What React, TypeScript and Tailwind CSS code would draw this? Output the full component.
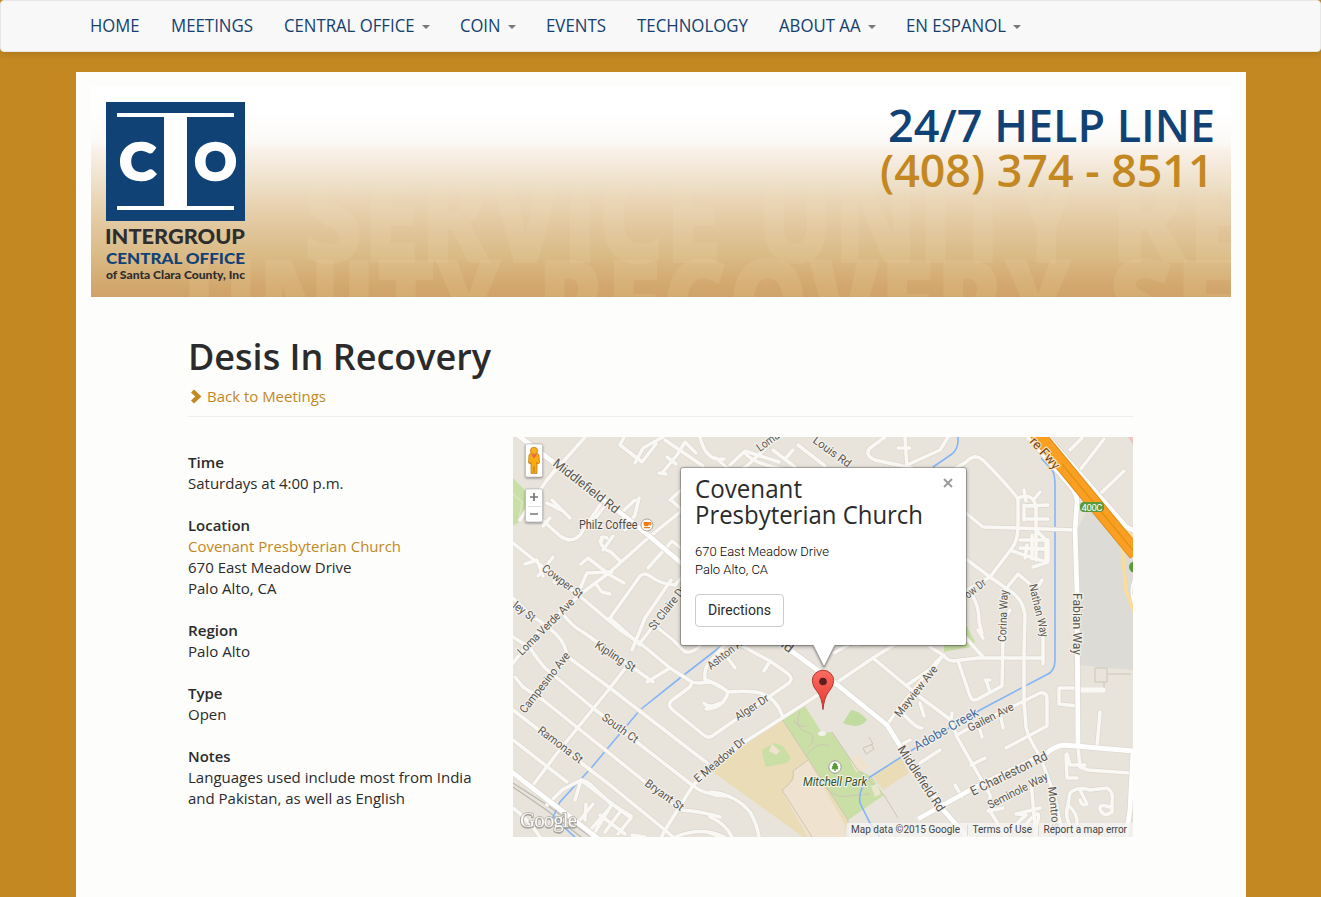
import React from "react";

const NAV = [
  { label: "HOME", left: "w-[81px]", text: 49.5 },
  { label: "MEETINGS", left: "w-[113px]", text: 82 },
  { label: "CENTRAL OFFICE", left: "w-[176px]", text: 130.5, caret: true },
  { label: "COIN", left: "w-[86px]", text: 40.5, caret: true },
  { label: "EVENTS", left: "w-[91px]", text: 60 },
  { label: "TECHNOLOGY", left: "w-[142px]", text: 111 },
  { label: "ABOUT AA", left: "w-[127px]", text: 81.5, caret: true },
  { label: "EN ESPANOL", left: "w-[140px]", text: 100, caret: true },
];

function Fit({ text, width, size, weight = 400 }: { text: string; width: number; size: number; weight?: number }) {
  return (
    <svg width={width} height={size * 1.3} className="overflow-visible">
      <text x={0} y={size} fontSize={size} fontWeight={weight} textLength={width} lengthAdjust="spacingAndGlyphs" fill="currentColor">
        {text}
      </text>
    </svg>
  );
}

function Nav() {
  return (
    <nav className="flex h-[52px] rounded border border-[#e7e7e7] bg-[#f8f8f8] pl-[89px] text-[#13406f] shadow-[0_2px_6px_rgba(90,60,0,0.22)]">
      {NAV.map((n) => (
        <div key={n.label} className={`flex shrink-0 items-start pt-[13px] ${n.left}`}>
          <Fit text={n.label} width={n.text} size={18} />
          {n.caret && <span className="mt-[11px] ml-[7px] border-x-4 border-t-4 border-x-transparent border-t-[#777]" />}
        </div>
      ))}
    </nav>
  );
}

function Logo() {
  return (
    <svg width="140" height="184" viewBox="106 102 140 184" className="shrink-0" fontFamily="Lato, sans-serif">
      <rect x="106" y="102" width="139" height="119" fill="#114275" />
      <path d="M117 113h117v4h-47v89h47v4H117v-4h47v-89h-47z" fill="#fff" />
      <g fill="#fff" stroke="#fff" strokeWidth="2.6" fontWeight="900" fontSize="51">
        <text x="119.500" y="179.500" textLength="36" lengthAdjust="spacingAndGlyphs">C</text>
        <text x="194.500" y="179.500" textLength="42" lengthAdjust="spacingAndGlyphs">O</text>
      </g>
      <g fontWeight="900">
        <text x="105" y="244" fontSize="20" fill="#2e2e2e" textLength="140" lengthAdjust="spacingAndGlyphs">INTERGROUP</text>
        <text x="106" y="264" fontSize="15.5" fill="#114275" textLength="139" lengthAdjust="spacingAndGlyphs">CENTRAL OFFICE</text>
        <text x="106" y="279" fontSize="11" fill="#2e2e2e" textLength="139" lengthAdjust="spacingAndGlyphs">of Santa Clara County, Inc</text>
      </g>
    </svg>
  );
}

function Watermark() {
  return (
    <svg className="absolute inset-0" width="1140" height="211" viewBox="91 86 1140 211" fontFamily="Open Sans, sans-serif" fontWeight="800" fontSize="127">
      <defs>
        <linearGradient id="ink" gradientUnits="userSpaceOnUse" x1="0" y1="165" x2="0" y2="297">
          <stop offset="0" stopColor="#f3e6c6" stopOpacity="0" />
          <stop offset="0.3" stopColor="#f3e6c6" stopOpacity="0.1" />
          <stop offset="0.6" stopColor="#f3e0bc" stopOpacity="0.13" />
          <stop offset="1" stopColor="#ecd094" stopOpacity="0.19" />
        </linearGradient>
      </defs>
      <g fill="url(#ink)">
        <text x="303" y="263" textLength="419" lengthAdjust="spacingAndGlyphs">SERVICE</text>
        <text x="757" y="263" textLength="323" lengthAdjust="spacingAndGlyphs">UNITY</text>
        <text x="1110" y="263" textLength="140" lengthAdjust="spacingAndGlyphs">RE</text>
        <text x="182" y="351" textLength="320" lengthAdjust="spacingAndGlyphs">UNITY</text>
        <text x="537" y="351" textLength="535" lengthAdjust="spacingAndGlyphs">RECOVERY</text>
        <text x="1108" y="351" textLength="130" lengthAdjust="spacingAndGlyphs">SE</text>
      </g>
    </svg>
  );
}

function Banner() {
  return (
    <header className="relative flex h-[211px] justify-between overflow-hidden bg-[linear-gradient(180deg,#fff_0%,#fff_12%,#fbfaf7_26%,#f8efe6_32%,#efe2cd_44%,#e9d4b4_55%,#e1c69c_68%,#dabb86_80%,#d5ad75_90%,#cfa268_100%)] pr-[16px] pl-[15px]">
      <Watermark />
      <div className="relative pt-4">
        <Logo />
      </div>
      <div className="relative flex flex-col items-end pt-[10px]">
        <div className="h-[45px] text-[#114275]">
          <Fit text="24/7 HELP LINE" width={327} size={46} weight={600} />
        </div>
        <div className="h-[45px] pr-px text-[#c38822]">
          <Fit text="(408) 374 - 8511" width={333.500} size={46} weight={600} />
        </div>
      </div>
    </header>
  );
}

const MINOR = [
  "M777 437L748 465L680 512L648 538L610 572L582 593L533 637L510 667",
  "M513 543L543 567L582 598L620 630L640 643L670 668L692 682Q697 684 707 682Q715 682 720 687",
  "M706 680Q720 685 728 692Q750 690 760 693Q776 698 782 715",
  "M728 692Q724 708 706 709", "M692 682L690 687L671 701Q667 706 674 711L705 736Q710 739 715 734L789 683Q794 678 787 673L770 661L753 652Q730 637 722 648L708 664Q704 670 705 680",
  "M770 661L764 671", "M722 650L735 668", "M704 703Q708 709 720 703",
  "M560 610Q572 627 583 632L653 682", "M513 598L533 617Q560 633 565 648L568 657L610 688L707 763",
  "M513 637L530 648Q538 660 545 668L593 708L692 785Q704 795 725 796",
  "M515 677L523 687L543 700L578 728L680 810Q700 811 720 817",
  "M513 710L580 762L610 785L665 830L673 837", "M513 740L567 782",
  "M630 662L610 688L558 752L533 785", "M660 840L665 830L692 787L710 767L743 743L810 700L833 685L873 658L897 643L967 590L990 577L1012 548Q1018 540 1018 525L1018 500Q1018 496 983 460Q975 453 966 462L945 475",
  "M640 643L654 625L673 640L684 651Q690 655 700 646", "M647 682L670 668",
  "M560 463L547 480L531 503L520 520", "M585 437L547 480", "M547 503L563 511M552 500L570 518M543 526L550 518",
  "M541 519L560 536Q571 544 580 535L600 505", "M590 525L604 507", "M600 541Q603 550 611 552L620 561M602 540Q599 535 607 538",
  "M625 530L635 515L639 498M622 512L635 500", "M624 437L620 445L642 462L656 444M635 463L643 448L663 437",
  "M665 440L703 466M663 472L677 455L685 442L696 453M666 474L659 473M667 457L676 464",
  "M581 564L588 558L610 575L624 583M595 583L602 592L610 594M613 536L603 550", "M610 618L640 576Q644 572 650 576Q660 584 675 585L683 576",
  "M610 618L640 645M578 593L587 573L612 572M543 576L537 560L525 564M553 557L538 576M567 585L554 582",
  "M648 568L672 541L683 550", "M670 500L681 490M671 500L681 509", "M671 580L645 618L632 650",
  "M700 437Q706 462 724 459M716 458L735 475M745 453Q753 464 787 470M773 450L795 467M730 465L745 451L779 462M785 459L793 450",
  "M798 445L825 466M870 448Q864 455 875 460L912 468M870 448L885 437M905 437L907 468M898 448L910 448M907 465L940 450L948 437",
  "M575 800L581 780L611 803L631 818L618 834M585 820L586 804M580 820L593 804M592 837L612 804M600 815L625 834M608 810L592 828M620 812L605 832M645 837L632 835",
  "M513 808Q529 820 540 837M547 805L562 790L577 782Q583 778 591 785L610 803L631 816",
  "M675 837Q702 826 724 837M710 792Q735 794 750 812Q757 824 759 837M710 817Q726 824 732 837M710 833L720 837",
  "M887 725L896 712L936 662L944 655M873 658L920 697L951 720L957 737L990 795L990 811L1006 837M900 710Q916 729 922 728",
  "M930 647L943 655Q948 661 953 661L978 658L1015 658L1043 658M943 655L936 665M958 661L970 696Q972 702 978 699L1002 686L1003 635Q1003 620 1010 610M990 680L985 680M986 680L990 692",
  "M983 638L978 630M952 713L951 720M920 703L924 716M957 735L980 722L1024 701L1040 693Q1047 691 1047 700L1047 726L1006 748M1024 705L1024 651L1025 615Q1023 601 1013 593L990 577L966 559",
  "M1000 713L1003 728M980 730L982 737M971 765L985 758M955 785L962 797M1008 832L1026 815L1016 814L1040 808M1024 700L1026 727Q1028 738 1040 756L1055 797L1063 837M1031 782L1036 837",
  "M1043 664L1043 635M966 513L983 527L1017 528L1075 530M1005 590L1018 574L1030 584M1039 585L1042 580M967 590Q979 600 979 622L982 633",
  "M1018 498Q1034 492 1036 508L1036 560M1035 498L1040 492M1026 501L1024 490M1024 505L1024 520M1024 506L1048 505M1024 519L1048 519M1036 530L1046 540L1046 562L1012 551M1020 548L1046 549M1025 558L1027 545M1020 540L1048 540M1048 540L1048 562L1033 567M1036 549L1047 549M1032 535L1032 559",
  "M1077 688L1059 688L1059 704L1077 706M1078 747L1080 767L1088 770L1130 773M1100 712L1097 747M1067 754L1070 765L1085 765M1066 755L1067 778L1077 778",
  "M1068 805L1070 793Q1078 786 1090 790L1107 788Q1114 792 1112 802L1112 812Q1103 818 1100 809Q1099 803 1110 807M1068 805Q1063 821 1077 834M1080 790L1087 804Q1082 807 1080 800M1068 805Q1078 813 1077 824",
  "M1080 470L1104 439M1070 450L1082 438M1101 493L1124 471M965 637L983 657M920 763L940 750M907 685L935 666M900 745L910 740",
  "M1020 832Q1042 803 1038 820L1035 837M1003 808L988 811M848 645L834 653M850 643Q857 647 867 642",
];

const MAJOR = [
  "M515 433L553 462L617 510L648 535L680 562L790 650L835 683L887 725L902 749L945 812L970 840",
  "M509 770L557 807L600 840",
  "M918 819L970 790L1047 753Q1055 746 1064 745L1133 751L1130 810L1126 837",
  "M1026 434L1072 488Q1077 494 1077 502L1075 530L1077 593L1078 747",
  "M1044 433L1122 522Q1126 529 1135 530",
];

type L = [string, number, number, number, number, number?];
const LABELS: L[] = [
  ["Middlefield Rd", 552, 465, 38, 80, 13],
  ["Cowper St", 541, 570, 37, 48],
  ["ley St", 512, 607, 37, 25],
  ["Loma Verde Ave", 522, 656, -45, 75],
  ["Campesino Ave", 525, 714, -52, 74],
  ["Kipling St", 594, 647, 33, 46],
  ["South Ct", 601, 719, 36, 42],
  ["Ramona St", 537, 732, 37, 53],
  ["Bryant St", 644, 785, 36, 45],
  ["E Meadow Dr", 698, 783, -40, 63],
  ["Alger Dr", 738, 721, -33, 38],
  ["Ashton A", 711, 670, -38, 40],
  ["St Claire Dr", 654, 631, -52, 53],
  ["Loma", 760, 452, -36, 25],
  ["Louis Rd", 812, 442, 36, 44],
  ["ld", 780, 646, 38, 12, 12.5],
  ["Mayview Ave", 900, 718, -52, 62],
  ["Middlefield Rd", 897, 749, 57, 76, 12.5],
  ["Gailen Ave", 970, 732, -27, 50],
  ["E Charleston Rd", 973, 796, -26, 84, 13],
  ["Seminole Way", 990, 809, -27, 66],
  ["Montros", 1048, 787, 84, 42],
  ["Fabian Way", 1073, 593, 90, 62, 12.5],
  ["Nathan Way", 1029, 585, 77, 54],
  ["Corina Way", 1006, 642, -88, 52],
  ["ow Dr", 968, 599, -38, 24],
];

function StreetMap() {
  return (
    <svg width="620" height="400" viewBox="513 437 620 400" fontFamily="Roboto, sans-serif">
      <rect x="513" y="437" width="620" height="400" fill="#e8e4dc" />
      <path d="M1077 530L1092 500L1133 560V670L1078 665z" fill="#dddbd5" />
      <path d="M1128 437h5v8z" fill="#efc6bd" />
      <path d="M513 478L524 489L529 502L522 520L513 526z" fill="#c9dfa5" />
      <path d="M513 494L522 502L519 519" fill="none" stroke="#dbe6c5" strokeWidth="1.5" />
      <path d="M966 625L975 641Q974 648 964 648L944 652L944 644z" fill="#c9dfa5" />
      <path d="M710 770L782 719L848 820L843 837H803z" fill="#ebdcb8" />
      <path d="M808 760L845 825L843 837H808L783 793Q783 786 794 780L793 771z" fill="#efe3cf" />
      <path d="M782 719L804 705L814 720L822 733L832 732L857 769L872 777L884 795L848 820z" fill="#c9dfa5" />
      <path d="M762 750L774 743L783 746L791 758L787 763L766 767L763 757z" fill="#c9dfa5" />
      <path d="M772 744L780 751L776 755L769 751z" fill="#efe3cf" />
      <path d="M850 760L858 754L870 768L856 772z" fill="#efe3cf" />
      <path d="M843 723L851 710Q860 711 867 720Q859 730 843 723z" fill="#c2dba0" />
      <path d="M872 775L901 756L909 773L883 790z" fill="#ebdcb8" />
      <g fill="none" stroke="#cdc6b5" strokeWidth="1">
        <path d="M782 719L848 820M808 760L793 771Q796 780 782 790L812 837M800 711Q793 730 810 733Q817 740 808 747M794 720Q797 728 806 726M806 756Q818 740 829 746M832 732L857 769L884 795L898 818M863 748L873 744L869 737M863 748L866 754L874 749L871 744M848 820L848 837M819 779Q832 800 848 796L870 794" />
        <path d="M1095 668h12v14h-12zM1107 674h24M1104 682v6" />
      </g>
      <g fill="none" stroke="#bbb8b1" strokeWidth="1.3">
        <path d="M513 783L547 805L595 840M513 787L545 809L585 840" />
      </g>
      <g fill="none" stroke="#85b4f5" strokeWidth="1.6">
        <path d="M958 437Q959 448 952 454L933 467M720 647L680 678L640 710L623 730L592 767L560 802L553 817L578 840" />
        <path d="M1041 458L1052 470Q1055 474 1055 485V660Q1055 672 1046 675L980 710L920 745L870 777Q858 788 860 803L870 823L880 837" />
      </g>
      <g fill="none" stroke="#dcd7cc" strokeWidth="4.8" strokeLinecap="round" strokeLinejoin="round">
        {MINOR.map((d) => <path key={d} d={d} />)}
      </g>
      <g fill="none" stroke="#faf8f5" strokeWidth="3.5" strokeLinecap="round" strokeLinejoin="round">
        {MINOR.map((d) => <path key={d} d={d} />)}
        <path d="M1077 690L1103 690" strokeWidth="5" />
      </g>
      <path d="M1108 523L1122 545L1126 590L1134 612" fill="none" stroke="#fbdc9a" strokeWidth="3.500" />
      <path d="M1124 527L1135 540" fill="none" stroke="#fbdc9a" strokeWidth="4" />
      <g fill="none" stroke="#d9d4ca" strokeWidth="6" strokeLinejoin="round">
        {MAJOR.map((d) => <path key={d} d={d} />)}
      </g>
      <g fill="none" stroke="#fff" strokeWidth="4.8" strokeLinejoin="round">
        {MAJOR.map((d) => <path key={d} d={d} />)}
      </g>
      <path d="M1034 430L1136 554" stroke="#e08c1a" strokeWidth="15" />
      <path d="M1034 430L1136 554" stroke="#fb9f22" strokeWidth="13" />
      <path d="M1062 464L1136 554" stroke="#dc9314" strokeWidth="1.3" />
      <path d="M1134 580Q1129 590 1134 604" stroke="#fff" strokeWidth="2" fill="none" />
      <circle cx="1134.500" cy="567" r="5.500" fill="#5b9b3b" />
      <rect x="1080" y="502" width="24" height="10" rx="4" fill="#5b9b3b" />
      <text x="1081.5" y="510.5" fontSize="9.5" fill="#fff" textLength="21">400C</text>
      <g fill="#5a5751" stroke="#f4f1eb" strokeWidth="2.4" strokeLinejoin="round" style={{ paintOrder: "stroke" }}>
        {LABELS.map(([t, x, y, r, w, s = 11.5], i) => (
          <text key={i} transform={`translate(${x} ${y}) rotate(${r})`} fontSize={s} textLength={w} lengthAdjust="spacingAndGlyphs">{t}</text>
        ))}
        <text x="579" y="529" fontSize="12.500" fill="#4d4a45" textLength="58.5" lengthAdjust="spacingAndGlyphs">Philz Coffee</text>
        <text transform="translate(917 751) rotate(-30)" fontSize="13" fill="#436c9b" textLength="72" lengthAdjust="spacingAndGlyphs">Adobe Creek</text>
        <text x="803" y="786" fontSize="12.500" fontStyle="italic" fill="#2f5528" textLength="64" lengthAdjust="spacingAndGlyphs">Mitchell Park</text>
        <text transform="translate(1029 442) rotate(48)" fontSize="13" fill="#74451a" stroke="#fde3bb" textLength="38">re Fwy</text>
      </g>
      <circle cx="647" cy="525" r="6" fill="#fff" stroke="#aaa49a" />
      <path d="M643.5 522h7v1.5h-1.4q-.3 2.7-1.6 2.7h-2.2q-1.8 0-1.8-4.2zM644 527h6v1.2h-6z" fill="#ef7b12" />
      <path d="M649 522.8h2v2h-2" fill="none" stroke="#ef7b12" />
      <ellipse cx="822" cy="733.5" rx="4" ry="2.5" fill="#f3f1eb" />
      <path d="M871 786l6-2 4 10-6 3z" fill="#e9e6cf" />
      <circle cx="835" cy="767" r="6.2" fill="#fff" stroke="#9a9d90" />
      <path d="M835 762.6l2.4 2-.6.6 1.6 1.7-.7.6.8 1.7H831.500l.8-1.700-.7-.6 1.600-1.700-.6-.6zM834.300 769h1.400v2h-1.400z" fill="#5b9b3b" />
      <text x="520" y="827" fontFamily="Liberation Serif, serif" fontSize="21" fill="#fbfaf8" stroke="#aeaaa2" strokeWidth="1.3" style={{ paintOrder: "stroke", filter: "drop-shadow(0.500px 1px 0.500px rgba(100,100,95,.5))" }} textLength="57">Google</text>

      <g>
        <rect x="847" y="823" width="286" height="14" fill="#f5f5f3" fillOpacity="0.78" />
        <path d="M967.500 825v11M1038.500 825v11" stroke="#dedbd5" />
        <g fontSize="10.5" fill="#444">
          <text x="851" y="833" textLength="109" lengthAdjust="spacingAndGlyphs">Map data ©2015 Google</text>
          <text x="972.500" y="833" textLength="59.500" lengthAdjust="spacingAndGlyphs">Terms of Use</text>
          <text x="1043.500" y="833" textLength="83.500" lengthAdjust="spacingAndGlyphs">Report a map error</text>
        </g>
      </g>

      <defs>
        <linearGradient id="pin" x1="0" y1="0" x2="0" y2="1">
          <stop offset="0" stopColor="#fb6d62" />
          <stop offset="1" stopColor="#e8372c" />
        </linearGradient>
      </defs>
      <path d="M823 709.500Q822 698 817.500 692Q812.300 686.500 812.300 680.500A10.700 10.300 0 0 1 833.700 680.500Q833.700 686.500 828.500 692Q824 698 823 709.500z" fill="url(#pin)" stroke="#b23b34" strokeWidth="1" />
      <circle cx="823" cy="681.500" r="3.800" fill="#5c1f1e" />

      <g style={{ filter: "drop-shadow(0 1px 1px rgba(0,0,0,.4))" }}>
        <rect x="525.500" y="444" width="17" height="33" rx="1.500" fill="#fff" stroke="#bbb" strokeWidth=".7" />
        <rect x="525.500" y="489" width="17" height="33" rx="1.500" fill="#fff" stroke="#bbb" strokeWidth=".7" />
      </g>
      <g stroke="#bd7610" strokeWidth=".7">
        <path d="M529 455q1-2 3-2h4q2 0 3 2l.5 8-1.800 1-.7-2v11.500h-2.500l-.5-7-.5 7H531V462l-.7 2-1.800-1z" fill="#f9ac12" />
        <circle cx="534" cy="450.800" r="3.600" fill="#f9ad1c" />
      </g>
      <path d="M531 454.500h6l-3 4z" fill="#ef6350" />
      <path d="M530 497h8M534 493v8M530 514h8" stroke="#777" strokeWidth="1.700" />
      <path d="M528 506.500h13" stroke="#ddd" />
    </svg>
  );
}

function InfoWindow() {
  return (
    <div className="absolute top-[31px] left-[168px] h-[177px] w-[285px] rounded-[2px] bg-white pt-[5px] pl-[14px] text-[#2b2b2b] shadow-[0_0_0_1px_rgba(0,0,0,0.2),0_1px_4px_rgba(0,0,0,0.45)]">
      <svg width="24" height="26" className="absolute top-[175px] left-[131px] overflow-visible">
        <path d="M1 2L12 24L23 2" fill="#fff" stroke="#999" strokeWidth="1" style={{ filter: "drop-shadow(0 1px 1px rgba(0,0,0,.35))" }} />
        <path d="M0 0h24v2H0z" fill="#fff" />
      </svg>
      <svg width="10" height="10" className="absolute top-[10px] right-[12.500px]">
        <path d="M1 1L9 9M9 1L1 9" stroke="#999" strokeWidth="1.800" />
      </svg>
      <h4 className="flex flex-col">
        <span className="h-[26px]"><Fit text="Covenant" width={107} size={25} /></span>
        <span className="h-[26px]"><Fit text="Presbyterian Church" width={228} size={25} /></span>
      </h4>
      <div className="mt-[18px] font-['Roboto'] text-black">
        <div className="h-[18px]"><Fit text="670 East Meadow Drive" width={134} size={13} weight={300} /></div>
        <div className="h-[18px]"><Fit text="Palo Alto, CA" width={73} size={13} weight={300} /></div>
      </div>
      <button className="mt-[15px] flex h-[33px] w-[89px] justify-center rounded border border-[#ccc] bg-white pt-[5px] font-['Roboto'] text-[#2b2b2b]">
        <Fit text="Directions" width={63} size={14.5} />
      </button>
    </div>
  );
}

const DETAILS: { title: string; rows: { t: string; w: number; link?: boolean }[]; w: number }[] = [
  { title: "Time", w: 36, rows: [{ t: "Saturdays at 4:00 p.m.", w: 155.500 }] },
  { title: "Location", w: 62, rows: [{ t: "Covenant Presbyterian Church", w: 213, link: true }, { t: "670 East Meadow Drive", w: 163.500 }, { t: "Palo Alto, CA", w: 88.500 }] },
  { title: "Region", w: 50, rows: [{ t: "Palo Alto", w: 62 }] },
  { title: "Type", w: 34.500, rows: [{ t: "Open", w: 38.500 }] },
  { title: "Notes", w: 42.500, rows: [{ t: "Languages used include most from India", w: 283.500 }, { t: "and Pakistan, as well as English", w: 217 }] },
];

export default function App() {
  return (
    <div className="h-[897px] overflow-hidden bg-[#c38822] font-['Open_Sans',sans-serif] text-[#2b2b2b]">
      <Nav />
      <main className="mx-auto mt-5 h-[825px] w-[1170px] bg-[#fdfdfb] px-[15px] pt-[14px]">
        <Banner />
        <section className="mr-[98px] ml-[97px]">
          <div className="h-[120px] border-b border-[#eeeeec] pt-[37px]">
            <h1 className="h-[52px]"><Fit text="Desis In Recovery" width={303} size={36} weight={600} /></h1>
            <a className="flex text-[#c38822]">
              <svg width="19" height="20" className="shrink-0">
                <path d="M3 6.500L6 3.500L13.500 10.500L6 17.500L3 14.500L7.300 10.500z" fill="currentColor" />
              </svg>
              <span className="pt-px"><Fit text="Back to Meetings" width={119} size={15} /></span>
            </a>
          </div>
          <div className="flex pt-5">
            <div className="flex w-[325px] shrink-0 flex-col gap-[21px] pt-4">
              {DETAILS.map((d) => (
                <div key={d.title}>
                  <div className="h-[21px]"><Fit text={d.title} width={d.w} size={15} weight={600} /></div>
                  {d.rows.map((r) => (
                    <div key={r.t} className={r.link ? "h-[21px] text-[#c38822]" : "h-[21px]"}>
                      <Fit text={r.t} width={r.w} size={15} />
                    </div>
                  ))}
                </div>
              ))}
            </div>
            <div className="relative h-[400px] w-[620px] shrink-0 overflow-hidden">
              <StreetMap />
              <InfoWindow />
            </div>
          </div>
        </section>
      </main>
    </div>
  );
}
